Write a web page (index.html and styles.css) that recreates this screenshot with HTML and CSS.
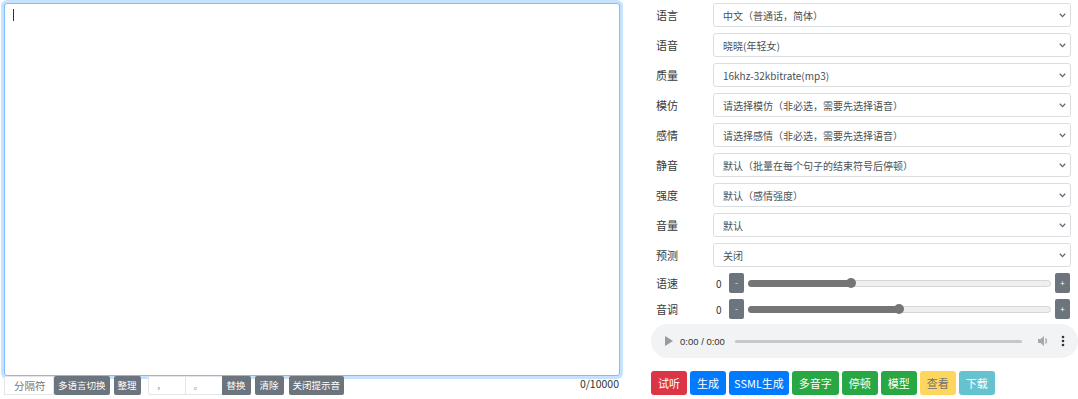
FILE: index.html
```html
<!DOCTYPE html>
<html lang="zh">
<head>
<meta charset="utf-8">
<title>TTS</title>
<link rel="stylesheet" href="styles.css">
</head>
<body>
<div class="page">
  <div class="left">
    <div class="editor"><span class="caret"></span></div>
    <div class="toolbar">
      <span class="addon">分隔符</span>
      <span class="tbtn">多语言切换</span>
      <span class="tbtn gap">整理</span>
      <span class="tinput wide">，</span>
      <span class="tinput">。</span>
      <span class="tbtn flush roomy">替换</span>
      <span class="tbtn gap roomy">清除</span>
      <span class="tbtn gap5">关闭提示音</span>
      <span class="count">0/10000</span>
    </div>
  </div>
  <div class="right">
    <div class="row"><span class="lbl">语言</span><div class="sel"><span class="opt">中文（普通话，简体）</span><svg class="chev" width="7" height="5" viewBox="0 0 7 5"><path d="M0.8 0.8 L3.5 3.6 L6.2 0.8" stroke="#666" stroke-width="1.3" fill="none"/></svg></div></div>
    <div class="row"><span class="lbl">语音</span><div class="sel"><span class="opt">晓晓(年轻女)</span><svg class="chev" width="7" height="5" viewBox="0 0 7 5"><path d="M0.8 0.8 L3.5 3.6 L6.2 0.8" stroke="#666" stroke-width="1.3" fill="none"/></svg></div></div>
    <div class="row"><span class="lbl">质量</span><div class="sel"><span class="opt">16khz-32kbitrate(mp3)</span><svg class="chev" width="7" height="5" viewBox="0 0 7 5"><path d="M0.8 0.8 L3.5 3.6 L6.2 0.8" stroke="#666" stroke-width="1.3" fill="none"/></svg></div></div>
    <div class="row"><span class="lbl">模仿</span><div class="sel"><span class="opt">请选择模仿（非必选，需要先选择语音）</span><svg class="chev" width="7" height="5" viewBox="0 0 7 5"><path d="M0.8 0.8 L3.5 3.6 L6.2 0.8" stroke="#666" stroke-width="1.3" fill="none"/></svg></div></div>
    <div class="row"><span class="lbl">感情</span><div class="sel"><span class="opt">请选择感情（非必选，需要先选择语音）</span><svg class="chev" width="7" height="5" viewBox="0 0 7 5"><path d="M0.8 0.8 L3.5 3.6 L6.2 0.8" stroke="#666" stroke-width="1.3" fill="none"/></svg></div></div>
    <div class="row"><span class="lbl">静音</span><div class="sel"><span class="opt">默认（批量在每个句子的结束符号后停顿）</span><svg class="chev" width="7" height="5" viewBox="0 0 7 5"><path d="M0.8 0.8 L3.5 3.6 L6.2 0.8" stroke="#666" stroke-width="1.3" fill="none"/></svg></div></div>
    <div class="row"><span class="lbl">强度</span><div class="sel"><span class="opt">默认（感情强度）</span><svg class="chev" width="7" height="5" viewBox="0 0 7 5"><path d="M0.8 0.8 L3.5 3.6 L6.2 0.8" stroke="#666" stroke-width="1.3" fill="none"/></svg></div></div>
    <div class="row"><span class="lbl">音量</span><div class="sel"><span class="opt">默认</span><svg class="chev" width="7" height="5" viewBox="0 0 7 5"><path d="M0.8 0.8 L3.5 3.6 L6.2 0.8" stroke="#666" stroke-width="1.3" fill="none"/></svg></div></div>
    <div class="row"><span class="lbl">预测</span><div class="sel"><span class="opt">关闭</span><svg class="chev" width="7" height="5" viewBox="0 0 7 5"><path d="M0.8 0.8 L3.5 3.6 L6.2 0.8" stroke="#666" stroke-width="1.3" fill="none"/></svg></div></div>

    <div class="srow first">
      <span class="lbl">语速</span><span class="val">0</span>
      <span class="sbtn">-</span>
      <div class="track"><div class="fill" style="width:103px"></div><div class="thumb"></div></div>
      <span class="sbtn">+</span>
    </div>
    <div class="srow">
      <span class="lbl">音调</span><span class="val">0</span>
      <span class="sbtn">-</span>
      <div class="track"><div class="fill" style="width:151px"></div><div class="thumb"></div></div>
      <span class="sbtn">+</span>
    </div>

    <div class="audio">
      <svg class="play" width="8" height="10" viewBox="0 0 8 10"><path d="M0 0 L8 5 L0 10 Z" fill="#9a9a9a"/></svg>
      <span class="time">0:00 / 0:00</span>
      <div class="progress"></div>
      <svg class="vol" width="12" height="12" viewBox="0 0 12 12"><path d="M1 4 H3.5 L7 1 V11 L3.5 8 H1 Z" fill="#a8a8a8"/><path d="M8.5 3.5 Q10.5 6 8.5 8.5" stroke="#a8a8a8" stroke-width="1.3" fill="none"/></svg>
      <svg class="more" width="4" height="12" viewBox="0 0 4 12"><circle cx="2" cy="2" r="1.3" fill="#333"/><circle cx="2" cy="6" r="1.3" fill="#333"/><circle cx="2" cy="10" r="1.3" fill="#333"/></svg>
    </div>

    <div class="btns">
      <span class="btn red">试听</span>
      <span class="btn blue">生成</span>
      <span class="btn blue tight">SSML生成</span>
      <span class="btn green">多音字</span>
      <span class="btn green">停顿</span>
      <span class="btn green">模型</span>
      <span class="btn yellow off">查看</span>
      <span class="btn cyan off">下载</span>
    </div>
  </div>
</div>
</body>
</html>
```

FILE: styles.css
```css
* { box-sizing: border-box; }
html, body { margin: 0; padding: 0; background: #fff; }
body {
  font-family: "Noto Sans CJK SC", "Noto Sans", "Liberation Sans", sans-serif;
  color: #212529;
  width: 1078px;
  height: 399px;
  overflow: hidden;
}
.page { display: flex; }
.left {
  width: 651px;
  padding: 3px 0 0 4px;
}
.editor {
  width: 616px;
  height: 373px;
  border: 1px solid #80bdff;
  border-radius: 3px;
  box-shadow: 0 0 0 3px rgba(0, 123, 255, 0.22);
  background: #fff;
  padding: 5px 0 0 8px;
}
.caret {
  display: block;
  width: 1px;
  height: 12px;
  background: #333;
}
.toolbar {
  display: flex;
  align-items: center;
  width: 616px;
  height: 19px;
  font-size: 9.5px;
}
.addon {
  width: 50px;
  height: 19px;
  line-height: 17px;
  border: 1px solid #e3e6e9;
  color: #777;
  padding-left: 9px;
  font-size: 10.5px;
  background: #fff;
}
.tbtn {
  height: 19px;
  line-height: 19px;
  padding: 0 4px;
  background: #6c757d;
  color: #fff;
  border-radius: 2px;
  white-space: nowrap;
}
.tbtn.roomy { padding: 0 5px; }
.tbtn.gap { margin-left: 4px; }
.tbtn.gap5 { margin-left: 5px; }
.tbtn.flush { border-radius: 0 2px 2px 0; }
.tinput {
  width: 37px;
  height: 19px;
  line-height: 17px;
  border: 1px solid #e3e6e9;
  border-right: none;
  color: #999;
  padding-left: 8px;
  background: #fff;
}
.tinput.wide { margin-left: 7px; border-radius: 2px 0 0 2px; }
.count {
  margin-left: auto;
  margin-top: -4px;
  font-size: 10.5px;
  color: #333;
  padding-right: 1px;
}
.right {
  flex: 1;
  padding-top: 3px;
}
.row {
  display: flex;
  align-items: center;
  height: 24px;
  margin-bottom: 6px;
  padding-right: 7px;
}
.lbl {
  width: 62px;
  padding-left: 5px;
  font-size: 11px;
  color: #3a3a3a;
}
.sel {
  flex: 1;
  display: flex;
  align-items: center;
  height: 24px;
  border: 1px solid #dadde1;
  border-radius: 3px;
  background: #fff;
  color: #495057;
  font-size: 10px;
  padding: 0 4px 0 9px;
}
.opt { flex: 1; white-space: nowrap; }
.chev { display: block; }
.srow {
  display: flex;
  align-items: center;
  height: 20px;
  margin-top: 6px;
  padding-right: 8px;
}
.srow.first { margin-top: 5px; }
.val {
  width: 16px;
  padding-left: 3px;
  font-size: 10px;
  color: #333;
}
.sbtn {
  width: 15px;
  height: 20px;
  line-height: 19px;
  text-align: center;
  background: #6c757d;
  color: #fff;
  border-radius: 2px;
  font-size: 8px;
}
.track {
  flex: 1;
  display: flex;
  align-items: center;
  height: 7px;
  margin: 0 4px;
  border: 1px solid #d6d6d6;
  border-radius: 4px;
  background: #efefef;
}
.fill {
  height: 7px;
  margin: -1px 0 -1px -1px;
  background: #757575;
  border-radius: 4px 0 0 4px;
}
.thumb {
  width: 10px;
  height: 10px;
  margin-left: -5px;
  border-radius: 50%;
  background: #757575;
}
.audio {
  display: flex;
  align-items: center;
  height: 34px;
  margin-top: 5px;
  border-radius: 17px;
  background: #f1f3f4;
  padding: 0 13px 0 14px;
}
.play { margin-right: 7px; }
.time { font-size: 9.5px; color: #333; white-space: nowrap; font-family: "Liberation Sans", "Noto Sans", sans-serif; }
.progress {
  flex: 1;
  height: 3px;
  margin: 0 15px 0 10px;
  background: #c6c7c8;
  border-radius: 2px;
}
.vol { margin-right: 12px; }
.btns {
  display: flex;
  gap: 3px;
  margin-top: 13px;
}
.btn {
  height: 24px;
  line-height: 24px;
  padding: 0 7px;
  font-size: 11px;
  color: #fff;
  border-radius: 3px;
  white-space: nowrap;
}
.btn.tight { padding: 0 5px; }
.btn.red { background: #dc3545; }
.btn.blue { background: #007bff; }
.btn.green { background: #28a745; }
.btn.yellow { background: #ffc107; color: #212529; }
.btn.cyan { background: #17a2b8; }
.btn.off { opacity: 0.65; }
```
